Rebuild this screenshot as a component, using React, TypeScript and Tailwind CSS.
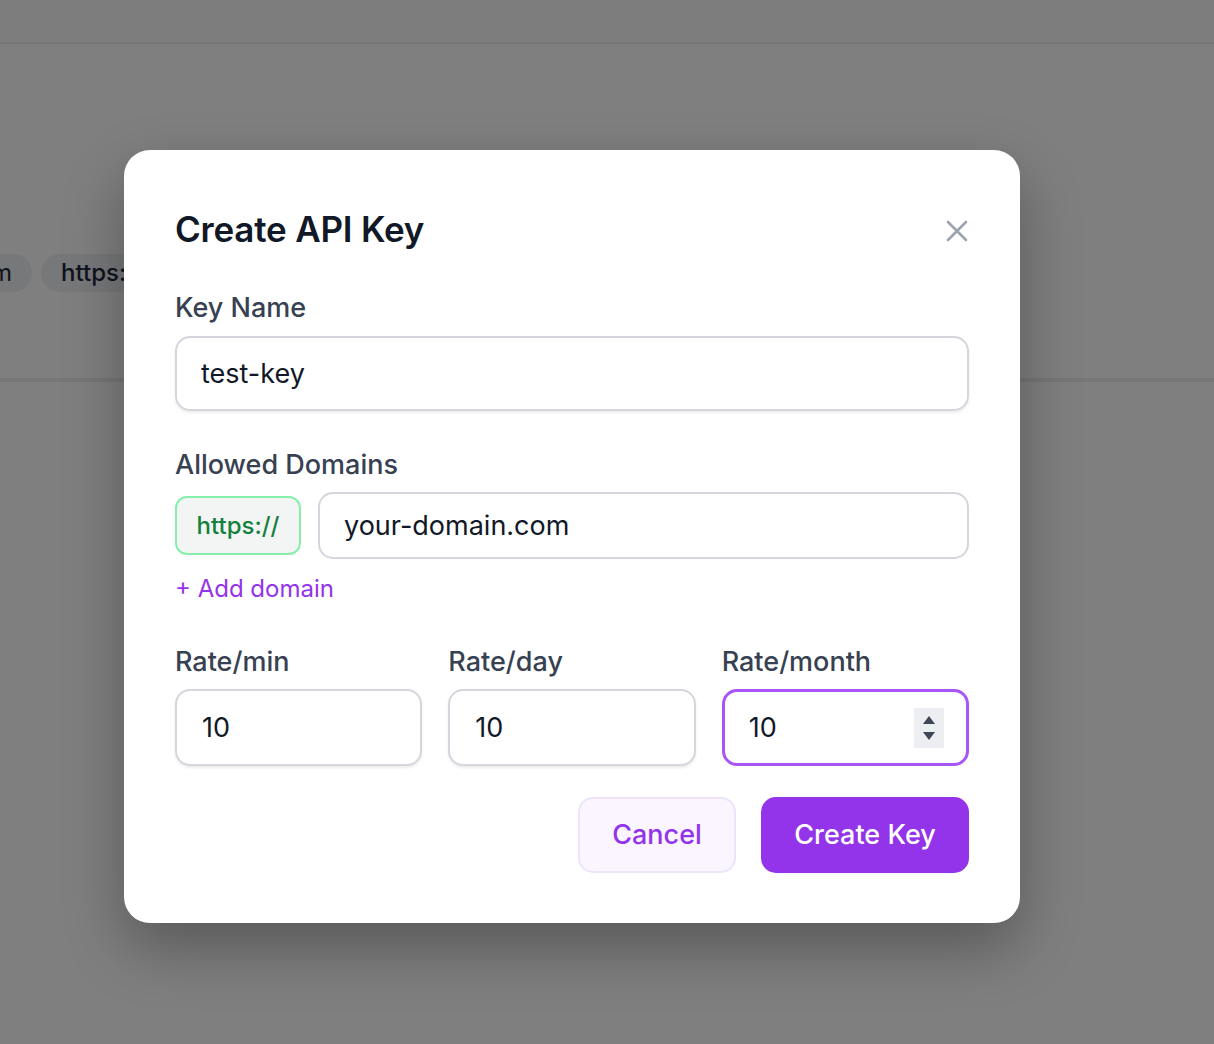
import React from "react";

function Spinner() {
  return (
    <div className="absolute right-[25px] top-1/2 -translate-y-1/2 w-[30px] h-[40px] bg-[#eceef1] flex flex-col items-center justify-center gap-[8px]">
      <svg width="12" height="8" viewBox="0 0 12 8"><path d="M6 0 L12 8 L0 8 Z" fill="#3f4756" /></svg>
      <svg width="12" height="8" viewBox="0 0 12 8"><path d="M0 0 L12 0 L6 8 Z" fill="#3f4756" /></svg>
    </div>
  );
}

export default function App() {
  const font = { fontFamily: "Inter, 'Noto Sans', sans-serif" };
  return (
    <div className="relative w-[1214px] h-[1044px] overflow-hidden bg-white" style={font}>
      {/* background page */}
      <div className="h-[44px] bg-[#fafbfa] border-b-2 border-[#ececec]" />
      <div className="h-[338px] border-b-4 border-[#ededed] pt-[210px]">
        <div className="flex gap-[9px] -ml-[64px]">
          <div className="h-[38px] px-[20px] rounded-full bg-[#eef0f3] flex items-center text-[24px] text-[#1e293b]">.com</div>
          <div className="h-[38px] px-[20px] rounded-full bg-[#eef0f3] flex items-center text-[24px] font-medium text-[#1e293b]">https://example.com</div>
        </div>
      </div>

      {/* overlay */}
      <div className="absolute inset-0 bg-black/50 pl-[124px] pt-[150px]">
        <div className="w-[896px] rounded-[26px] bg-white shadow-[0_25px_60px_rgba(0,0,0,0.3)] px-[51px] pt-[52px] pb-[50px]">
          <div className="flex items-center justify-between">
            <h2 className="text-[35px] leading-[54px] font-semibold text-[#111827] tracking-[-0.2px]">Create API Key</h2>
            <svg width="22" height="22" viewBox="0 0 22 22" className="mr-[1px] mt-[4px]">
              <path d="M2 2 L20 20 M20 2 L2 20" stroke="#9ca3af" strokeWidth="2.6" strokeLinecap="round" />
            </svg>
          </div>

          <div className="mt-[34px] text-[27px] leading-[36px] font-medium text-[#374151]">Key Name</div>
          <input
            readOnly
            value="test-key"
            className="mt-[10px] w-full h-[75px] rounded-[15px] border-2 border-[#d5d6dd] shadow-[0_2px_3px_rgba(0,0,0,0.08)] px-[24px] text-[27px] text-[#111827] outline-none"
          />

          <div className="mt-[36px] text-[27px] leading-[36px] font-medium text-[#374151]">Allowed Domains</div>
          <div className="mt-[9px] flex items-center gap-[17px]">
            <div className="w-[126px] h-[59px] rounded-[12px] border-2 border-[#86efac] bg-[#f2f5f4] flex items-center justify-center text-[24px] font-medium text-[#15803d]">https://</div>
            <input
              readOnly
              value="your-domain.com"
              className="flex-1 h-[67px] rounded-[15px] border-2 border-[#d5d6dd] px-[24px] text-[27px] text-[#111827] outline-none"
            />
          </div>
          <div className="mt-[12px] text-[24px] leading-[36px] text-[#9333ea]">+ Add domain</div>

          <div className="mt-[37px] grid grid-cols-3 gap-[26px]">
            {["Rate/min", "Rate/day", "Rate/month"].map((l, i) => (
              <div key={l}>
                <div className="text-[27px] leading-[36px] font-medium text-[#374151]">{l}</div>
                <div className="relative mt-[9px]">
                  <input
                    readOnly
                    value="10"
                    className={
                      i === 2
                        ? "w-full h-[77px] rounded-[15px] border-[3px] border-[#a855f7] px-[24px] text-[27px] text-[#111827] outline-none"
                        : "w-full h-[77px] rounded-[15px] border-2 border-[#d5d6dd] shadow-[0_2px_3px_rgba(0,0,0,0.08)] px-[25px] text-[27px] text-[#111827] outline-none"
                    }
                  />
                  {i === 2 && <Spinner />}
                </div>
              </div>
            ))}
          </div>

          <div className="mt-[31px] flex justify-end gap-[25px]">
            <button className="w-[158px] h-[76px] rounded-[15px] border-2 border-[#ede4fb] bg-[#faf5ff] text-[27px] font-medium text-[#9333ea]">Cancel</button>
            <button className="w-[208px] h-[76px] rounded-[15px] bg-[#9333ea] text-[27px] font-medium text-white">Create Key</button>
          </div>
        </div>
      </div>
    </div>
  );
}
